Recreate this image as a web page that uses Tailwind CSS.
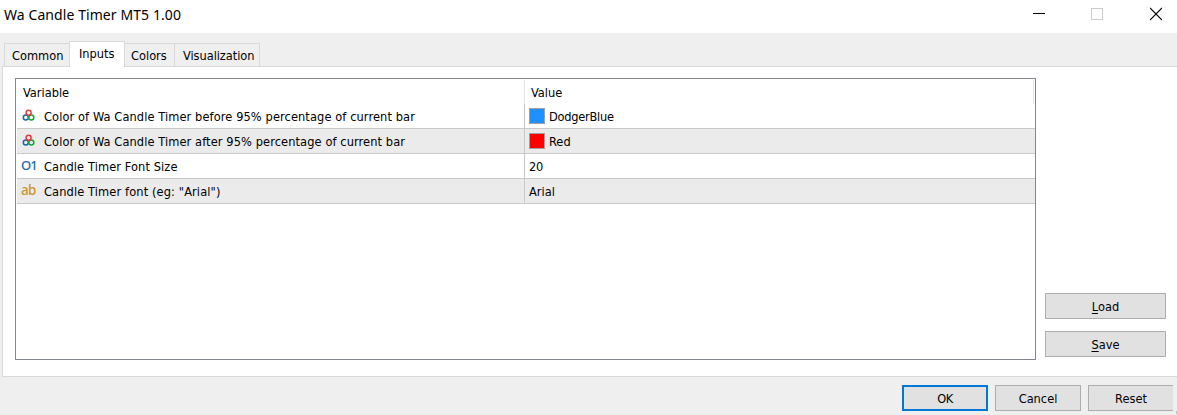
<!DOCTYPE html>
<html lang="en">
<head>
<meta charset="utf-8">
<title>Wa Candle Timer MT5 1.00</title>
<script src="https://cdn.jsdelivr.net/npm/@tailwindcss/browser@4"></script>
</head>
<body class="w-[1177px] h-[415px] overflow-hidden bg-[#efefef] text-black text-[12.7px] leading-[16px] font-['DejaVu_Sans_Condensed','DejaVu_Sans',sans-serif] [font-stretch:condensed] flex flex-col whitespace-nowrap">
<svg class="hidden"><symbol id="rgb" viewBox="0 0 13 12"><g fill="none" stroke-width="1.5"><circle cx="3.8" cy="8.6" r="2.5" stroke="#1667ad"/><circle cx="9.3" cy="8.6" r="2.5" stroke="#16a63a"/><circle cx="6.6" cy="3.7" r="2.5" stroke="#dc3f3f"/></g></symbol></svg>
<header class="h-[33px] shrink-0 bg-white flex items-start pl-1 pr-[15px]">
  <h1 class="text-[14px] leading-[20px] mt-[5px] font-['Noto_Sans',sans-serif]"><span class="tracking-[0.08px]">Wa Candle Timer MT5 1.00</span></h1>
  <svg class="ml-auto" width="12" height="33" shape-rendering="crispEdges"><path d="M0 13.5H12" stroke="#000"/></svg>
  <svg class="ml-[46px]" width="12" height="33" shape-rendering="crispEdges"><rect x=".5" y="8.5" width="11" height="11" fill="none" stroke="#ccc"/></svg>
  <svg class="ml-[47px]" width="12" height="33"><path d="M0 8L12 20M12 8L0 20" stroke="#000" stroke-width="1.1"/></svg>
</header>
<nav class="h-[33px] shrink-0 flex items-end pl-1">
  <div class="w-[66px] h-[23px] border border-b-0 border-[#d9d9d9] pt-[4px] pl-[7px]"><span>Common</span></div>
  <div class="relative z-10 w-[56px] h-[26px] -ml-px -mb-px bg-white border border-b-0 border-[#d9d9d9] pt-[4px] pl-[9px]"><span>Inputs</span></div>
  <div class="w-[51px] h-[23px] -ml-px border border-b-0 border-[#d9d9d9] pt-[4px] pl-[6px]"><span>Colors</span></div>
  <div class="w-[86px] h-[23px] -ml-px border border-b-0 border-[#d9d9d9] pt-[4px] pl-[8px]"><span class="tracking-[-0.05px]">Visualization</span></div>
</nav>
<main class="ml-[2px] h-[311px] shrink-0 bg-white border border-r-0 border-[#d9d9d9] flex pt-[11px] pl-3">
  <section class="w-[1021px] h-[282px] border border-[#828790] flex flex-col pl-px">
    <div class="h-[25px] flex pt-px pr-px">
      <div class="w-[508px] border-r border-[#e5e5e5] pt-[5px] pl-[6px]">Variable</div>
      <div class="grow border-r border-[#e5e5e5] pt-[5px] pl-[6px]">Value</div>
    </div>
    <div class="h-[25px] flex border-b border-[#c9c9c9]">
      <div class="w-[508px] border-r border-[#c9c9c9] flex pt-[5px] pl-[5px]"><svg class="w-[13px] h-[12px] mr-[9px]"><use href="#rgb"/></svg><span class="tracking-[0.1px]">Color of Wa Candle Timer before 95% percentage of current bar</span></div>
      <div class="flex pl-[4px] pt-[5px]"><i class="size-4 -mt-px mr-1 bg-[#1e90ff] border border-[#a0a0a0]"></i><span class="tracking-[-0.25px]">DodgerBlue</span></div>
    </div>
    <div class="h-[25px] flex border-b border-[#c9c9c9] bg-[#ebebeb]">
      <div class="w-[508px] border-r border-[#c9c9c9] flex pt-[5px] pl-[5px]"><svg class="w-[13px] h-[12px] mr-[9px]"><use href="#rgb"/></svg><span class="tracking-[0.1px]">Color of Wa Candle Timer after 95% percentage of current bar</span></div>
      <div class="flex pl-[4px] pt-[5px]"><i class="size-4 -mt-px mr-1 bg-[#ff0000] border border-[#a0a0a0]"></i><span>Red</span></div>
    </div>
    <div class="h-[25px] flex border-b border-[#c9c9c9]">
      <div class="w-[508px] border-r border-[#c9c9c9] flex pt-[5px] pl-[4px]"><b class="w-[23px] -mt-[2px] font-medium text-[13px] tracking-[-0.9px] text-[#1667a8] font-['Noto_Sans',sans-serif]">O1</b><span class="tracking-[0.1px]">Candle Timer Font Size</span></div>
      <div class="pl-[4px] pt-[5px] tracking-[-0.3px]">20</div>
    </div>
    <div class="h-[25px] flex border-b border-[#c9c9c9] bg-[#ebebeb]">
      <div class="w-[508px] border-r border-[#c9c9c9] flex pt-[5px] pl-[4px]"><b class="w-[23px] -mt-[2px] font-medium text-[13.5px] tracking-[-0.6px] text-[#c8962e] font-['Noto_Sans',sans-serif]">ab</b><span class="tracking-[0.12px]">Candle Timer font (eg: "Arial")</span></div>
      <div class="pl-[4px] pt-[5px]">Arial</div>
    </div>
  </section>
  <aside class="ml-[9px] w-[121px] flex flex-col gap-3 pt-[215px]">
    <button class="h-[26px] bg-[#e1e1e1] border border-[#adadad] pt-px"><span class="underline underline-offset-2">L</span>oad</button>
    <button class="h-[26px] bg-[#e1e1e1] border border-[#adadad] pt-px"><span class="underline underline-offset-2">S</span>ave</button>
  </aside>
</main>
<footer class="flex gap-[7px] pl-[902px] pt-2">
  <button class="w-[86px] h-[26px] shrink-0 bg-[#e1e1e1] border-2 border-[#0078d7] pt-px tracking-[-0.5px]">OK</button>
  <button class="w-[86px] h-[26px] shrink-0 bg-[#e1e1e1] border border-[#adadad] pt-px">Cancel</button>
  <button class="w-[85px] h-[26px] shrink-0 bg-[#e1e1e1] border border-r-0 border-[#adadad] pt-px">Reset</button>
  <i class="w-px h-[3px] shrink-0 self-end -mb-[3px] -ml-[4px] bg-[#bfbfbf]"></i>
</footer>
</body>
</html>
